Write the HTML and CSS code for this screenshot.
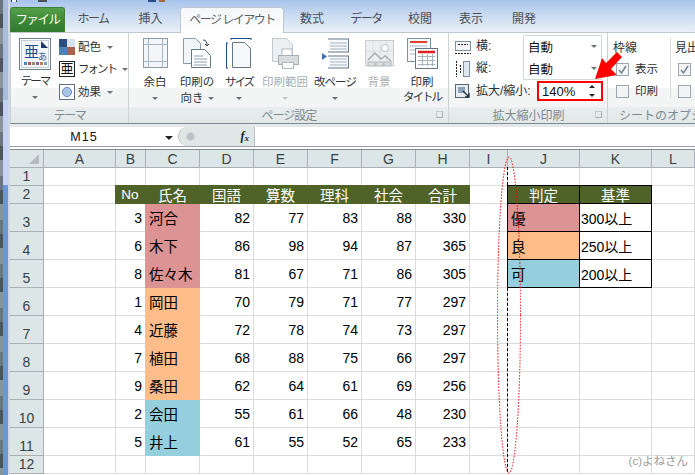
FILE: index.html
```html
<!DOCTYPE html>
<html lang="ja">
<head>
<meta charset="utf-8">
<title>ページ レイアウト</title>
<link rel="stylesheet" href="styles.css">
</head>
<body>
<div class="window">
  <div class="edge"><div class="edge-dark"></div><div class="edge-blue"><div class="edge-light"></div></div><div class="edge-pale"></div></div>
  <div class="main">
    <nav class="tabs">
      <div class="qat"><i class="q1"></i><i class="q2"></i><i class="q3"></i><i class="q4"></i></div>
      <div class="tab file kana">ファイル</div>
      <div class="tab w56 kana">ホーム</div>
      <div class="tab w59">挿入</div>
      <div class="tab active kana">ページ レイアウト</div>
      <div class="tab w56">数式</div>
      <div class="tab w52 kana">データ</div>
      <div class="tab w56">校閲</div>
      <div class="tab w46">表示</div>
      <div class="tab w60">開発</div>
    </nav>

    <section class="ribbon">
      <div class="group g-theme">
        <div class="group-body">
          <div class="big theme-btn">
            <svg class="ic-theme" width="32" height="33" viewBox="0 0 32 33">
              <rect x=".5" y=".5" width="31" height="31" fill="#fff" stroke="#6b7f8f"/>
              <rect x="2.5" y="2.5" width="27" height="27" fill="#f4f7fa" stroke="#c4ced6"/>
              <path d="M22 3l7 7h-7z" fill="#1f3a66"/>
              <text x="5" y="19" class="svg-t1">亜</text>
              <text x="19" y="22" class="svg-t2">あ</text>
              <rect x="5" y="24" width="3" height="3" fill="#4f81bd"/><rect x="9" y="24" width="3" height="3" fill="#c0504d"/><rect x="13" y="24" width="3" height="3" fill="#9b8a6d"/><rect x="17" y="24" width="3" height="3" fill="#8064a2"/><rect x="21" y="24" width="3" height="3" fill="#c07a50"/><rect x="25" y="24" width="3" height="3" fill="#7f9fbf"/>
            </svg>
            <span class="lbl theme-lbl kana2">テーマ</span>
            <i class="arrow"></i>
          </div>
          <div class="small-col">
            <div class="small"><svg width="16" height="16" viewBox="0 0 16 16"><rect width="8" height="8" fill="#2b4d86"/><rect x="8" width="8" height="8" fill="#dbe3ea"/><rect y="8" width="8" height="8" fill="#4f81bd"/><rect x="8" y="8" width="8" height="8" fill="#a9614f"/></svg><span class="lbl">配色</span><i class="arrow"></i></div>
            <div class="small"><span class="font-ic">亜</span><span class="lbl kana2">フォント</span><i class="arrow"></i></div>
            <div class="small"><svg width="16" height="16" viewBox="0 0 16 16"><rect x=".5" y=".5" width="15" height="15" fill="#fff" stroke="#5f7183"/><circle cx="8" cy="8" r="4.6" fill="#a9c4e6" stroke="#6c8fbc"/></svg><span class="lbl">効果</span><i class="arrow"></i></div>
          </div>
        </div>
        <div class="group-name kana">テーマ</div>
      </div>

      <div class="group g-page">
        <div class="group-body">
          <div class="big w42">
            <svg class="ic" width="25" height="31" viewBox="0 0 25 31"><rect x=".5" y=".5" width="24" height="29" fill="#f3f6f9" stroke="#8a9aa8"/><path d="M5.500 1v29M19.500 1v29M1 6.500h23M1 23.500h23" stroke="#a8b6c2"/></svg>
            <span class="lbl">余白</span><i class="arrow"></i>
          </div>
          <div class="big w42">
            <svg class="ic" width="28" height="31" viewBox="0 0 28 31"><path d="M.5.500h12l5 5v20H.500z" fill="#f3f6f9" stroke="#8a9aa8"/><path d="M8.500 11.500h13l6 6v12h-19z" fill="#fff" stroke="#64788c"/><path d="M11 18h9M11 21h13M11 24h13M11 27h13" stroke="#8ba0b4"/><path d="M20 2c3 0 4 2 4 5m-2-1l2 2 2-2" fill="none" stroke="#33485e"/></svg>
            <span class="lbl">印刷の<br>向き<i class="arrow inl"></i></span>
          </div>
          <div class="big w42">
            <svg class="ic" width="26" height="31" viewBox="0 0 26 31"><path d="M5 .500h20M5 0v2M25 0v2M.5 5v25M0 5h2M0 30h2" stroke="#1f4e8c"/><path d="M6.500 4.500h12l6 6v19h-18z" fill="#f6f8fa" stroke="#64788c"/></svg>
            <span class="lbl kana2">サイズ</span><i class="arrow"></i>
          </div>
          <div class="big w50 dim">
            <svg class="ic" width="27" height="31" viewBox="0 0 27 31"><path d="M.5.500h14l6 6v17H.500z" fill="#eceff1" stroke="#c3c8cc"/><rect x="10" y="11" width="10" height="7" fill="#fff" stroke="#b4babf"/><rect x="6.500" y="17.500" width="20" height="9" fill="#d8dcdf" stroke="#a8afb4"/><rect x="10.500" y="24.500" width="11" height="6" fill="#fff" stroke="#b4babf"/></svg>
            <span class="lbl">印刷範囲</span><i class="arrow"></i>
          </div>
          <div class="big w50">
            <svg class="ic" width="27" height="31" viewBox="0 0 27 31"><path d="M0 15l5 3.500L0 22z" fill="#3f6fb5"/><path d="M6.500.500h20v14h-20zM6.500 17.500h20v13h-20z" fill="#f7f9fb" stroke="none"/><path d="M6 1h21M6 14h21M6 18h21M6 30h21M26.500 1v13M26.500 18v12" stroke="#64788c"/><path d="M8 5h17M8 8h17M8 11h17M8 21h17M8 24h17M8 27h17" stroke="#a3b3c1"/></svg>
            <span class="lbl kana1">改ページ</span><i class="arrow"></i>
          </div>
          <div class="big w38 dim">
            <svg class="ic pic" width="29" height="27" viewBox="0 0 29 27"><rect x=".5" y=".5" width="28" height="25" fill="#eceeef" stroke="#c9cdd0"/><path d="M1 11h27M8 1v20M15 1v20M22 1v20" stroke="#dcdfe1"/><circle cx="20" cy="8" r="3.500" fill="#fff" stroke="#bcc1c5"/><path d="M3 20l7-7 6 6 4-3 6 5" fill="none" stroke="#a7adb2" stroke-width="1.500"/><rect x="3" y="22" width="7" height="4" fill="#ddd" stroke="#b3b8bc"/><rect x="11" y="22" width="7" height="4" fill="#ddd" stroke="#b3b8bc"/><rect x="19" y="22" width="7" height="4" fill="#ddd" stroke="#b3b8bc"/></svg>
            <span class="lbl">背景</span>
          </div>
          <div class="big w46 title-btn">
            <svg class="ic" width="31" height="31" viewBox="0 0 31 31"><rect x=".5" y=".5" width="23" height="23" fill="#f6f8fa" stroke="#7e91a3"/><path d="M3 4h17" stroke="#e04030" stroke-width="2"/><path d="M3 8h17M3 12h9M3 16h9" stroke="#b0bcc7"/><rect x="8.500" y="10.500" width="22" height="20" fill="#fff" stroke="#64788c"/><path d="M11 14h17" stroke="#e02020" stroke-width="2.500"/><path d="M11 18.500h17M11 22.500h17M11 26.500h17M15.500 16v12M20.500 16v12M25.500 16v12" stroke="#a3b3c1"/></svg>
            <span class="lbl">印刷<br><span class="kana2">タイトル</span></span>
          </div>
        </div>
        <div class="group-name"><span class="kana1">ページ設定</span><i class="launcher"></i></div>
      </div>

      <div class="group g-scale">
        <div class="group-body col">
          <div class="scale-row">
            <svg class="ic-s" width="16" height="16" viewBox="0 0 16 16"><rect x=".5" y="2.500" width="15" height="9" fill="#f5f7f9" stroke="#7e91a3"/><path d="M0 14.500h16M3 5.500h10" stroke="#222" stroke-dasharray="2 1"/></svg>
            <span class="lbl scale-lbl">横:</span>
            <div class="combo">自動<i class="arrow"></i></div>
          </div>
          <div class="scale-row">
            <svg class="ic-s" width="16" height="16" viewBox="0 0 16 16"><rect x="8.500" y=".5" width="6" height="15" fill="#dfe8f1" stroke="#7e91a3"/><path d="M1.500 0v16M5.500 4v8" stroke="#222" stroke-dasharray="2 1"/></svg>
            <span class="lbl scale-lbl">縦:</span>
            <div class="combo">自動<i class="arrow"></i></div>
          </div>
          <div class="scale-row">
            <svg class="ic-s" width="16" height="16" viewBox="0 0 16 16"><rect x=".5" y=".5" width="13" height="13" fill="#e8edf1" stroke="#52667a"/><rect x="3" y="3" width="7" height="6" fill="#8ca3ba"/><path d="M8 7l6 6m0-4v4h-4" fill="none" stroke="#1c2c3c" stroke-width="1.300"/></svg>
            <span class="lbl scale-lbl wide">拡大/縮小:</span>
            <div class="spin"><span>140%</span><span class="updown"><i class="up"></i><i class="down"></i></span></div>
          </div>
        </div>
        <div class="group-name"><span>拡大縮小印刷</span><i class="launcher"></i></div>
      </div>

      <div class="group g-sheet">
        <div class="group-body">
          <div class="opt-col">
            <div class="opt-head">枠線</div>
            <div class="opt"><span class="chk on"><svg width="11" height="11" viewBox="0 0 11 11"><path d="M2 6l2.500 3L9 2" fill="none" stroke="#7a8894" stroke-width="1.600"/></svg></span><span class="lbl">表示</span></div>
            <div class="opt"><span class="chk"></span><span class="lbl">印刷</span></div>
          </div>
          <div class="opt-col second">
            <div class="opt-head">見出し</div>
            <div class="opt"><span class="chk on"><svg width="11" height="11" viewBox="0 0 11 11"><path d="M2 6l2.500 3L9 2" fill="none" stroke="#7a8894" stroke-width="1.600"/></svg></span></div>
            <div class="opt"><span class="chk"></span></div>
          </div>
        </div>
        <div class="group-name left">シートのオプション</div>
      </div>
    </section>

    <div class="ribbon-gap"></div>

    <div class="formula">
      <div class="namebox"><span>M15</span><i class="arrow dark"></i></div>
      <div class="fx-part"><span class="knob"></span><span class="fx">f<sub>x</sub></span></div>
      <div class="input"></div>
    </div>
    <div class="formula-gap"></div>

    <div class="sheet">
      <div class="c hd corner"><i></i></div>
      <div class="c hd">A</div><div class="c hd">B</div><div class="c hd">C</div><div class="c hd">D</div><div class="c hd">E</div><div class="c hd">F</div><div class="c hd">G</div><div class="c hd">H</div><div class="c hd">I</div><div class="c hd">J</div><div class="c hd">K</div><div class="c hd">L</div>

      <div class="c rh">1</div>
      <div class="c"></div><div class="c"></div><div class="c"></div><div class="c"></div><div class="c"></div><div class="c"></div><div class="c"></div><div class="c"></div><div class="c"></div><div class="c"></div><div class="c"></div><div class="c"></div>

      <div class="c rh">2</div><div class="c"></div>
      <div class="c th no">No</div><div class="c th">氏名</div><div class="c th">国語</div><div class="c th">算数</div><div class="c th">理科</div><div class="c th">社会</div><div class="c th">合計</div>
      <div class="c"></div><div class="c th bx jl jt">判定</div><div class="c th bx jt">基準</div><div class="c"></div>

      <div class="c rh">3</div><div class="c"></div><div class="c n">3</div><div class="c nm pink">河合</div><div class="c n">82</div><div class="c n">77</div><div class="c n">83</div><div class="c n">88</div><div class="c n">330</div><div class="c"></div><div class="c nm pink bx jl">優</div><div class="c nm bx">300以上</div><div class="c"></div>
      <div class="c rh">4</div><div class="c"></div><div class="c n">6</div><div class="c nm pink">木下</div><div class="c n">86</div><div class="c n">98</div><div class="c n">94</div><div class="c n">87</div><div class="c n">365</div><div class="c"></div><div class="c nm orange bx jl">良</div><div class="c nm bx">250以上</div><div class="c"></div>
      <div class="c rh">5</div><div class="c"></div><div class="c n">8</div><div class="c nm pink">佐々木</div><div class="c n">81</div><div class="c n">67</div><div class="c n">71</div><div class="c n">86</div><div class="c n">305</div><div class="c"></div><div class="c nm blue bx jl">可</div><div class="c nm bx">200以上</div><div class="c"></div>
      <div class="c rh">6</div><div class="c"></div><div class="c n">1</div><div class="c nm orange">岡田</div><div class="c n">70</div><div class="c n">79</div><div class="c n">71</div><div class="c n">77</div><div class="c n">297</div><div class="c"></div><div class="c"></div><div class="c"></div><div class="c"></div>
      <div class="c rh">7</div><div class="c"></div><div class="c n">4</div><div class="c nm orange">近藤</div><div class="c n">72</div><div class="c n">78</div><div class="c n">74</div><div class="c n">73</div><div class="c n">297</div><div class="c"></div><div class="c"></div><div class="c"></div><div class="c"></div>
      <div class="c rh">8</div><div class="c"></div><div class="c n">7</div><div class="c nm orange">植田</div><div class="c n">68</div><div class="c n">88</div><div class="c n">75</div><div class="c n">66</div><div class="c n">297</div><div class="c"></div><div class="c"></div><div class="c"></div><div class="c"></div>
      <div class="c rh">9</div><div class="c"></div><div class="c n">9</div><div class="c nm orange">桑田</div><div class="c n">62</div><div class="c n">64</div><div class="c n">61</div><div class="c n">69</div><div class="c n">256</div><div class="c"></div><div class="c"></div><div class="c"></div><div class="c"></div>
      <div class="c rh">10</div><div class="c"></div><div class="c n">2</div><div class="c nm blue">会田</div><div class="c n">55</div><div class="c n">61</div><div class="c n">66</div><div class="c n">48</div><div class="c n">230</div><div class="c"></div><div class="c"></div><div class="c"></div><div class="c"></div>
      <div class="c rh">11</div><div class="c"></div><div class="c n">5</div><div class="c nm blue">井上</div><div class="c n">61</div><div class="c n">55</div><div class="c n">52</div><div class="c n">65</div><div class="c n">233</div><div class="c"></div><div class="c"></div><div class="c"></div><div class="c"></div>
      <div class="c rh">12</div><div class="c"></div><div class="c"></div><div class="c"></div><div class="c"></div><div class="c"></div><div class="c"></div><div class="c"></div><div class="c"></div><div class="c"></div><div class="c"></div><div class="c"></div><div class="c"></div>

      <div class="pagebreak"></div>
      <svg class="ellipse" width="30" height="330" viewBox="0 0 30 330"><ellipse cx="15" cy="165" rx="11.500" ry="158" fill="none" stroke="#f00" stroke-dasharray="1.500 1.500"/></svg>
      <div class="credit">(c)よねさん</div>
    </div>
  </div>

  <svg class="red-arrow" width="32" height="32" viewBox="0 0 32 32"><path d="M1 29L8 8l4 5L23 2l5 5-11 12 6 6z" fill="#f00"/></svg>
</div>
</body>
</html>
```

FILE: styles.css
```css
* { box-sizing: border-box; }
html, body { margin: 0; padding: 0; background: #fff; }
body {
  font-family: "Liberation Sans", "Noto Sans CJK JP", sans-serif;
  overflow: hidden;
}
i { display: block; font-style: normal; }

.window {
  position: relative;
  display: flex;
  width: 695px;
  height: 475px;
  overflow: hidden;
}

/* left edge */
.edge { display: flex; width: 10px; flex: none; }
.edge-dark { width: 3px; background: repeating-linear-gradient(#6c7480 0 14px, #4e545c 14px 28px, #8a929c 28px 44px); }
.edge-blue { width: 5px; background: #6b97da; }
.edge-light { height: 185px; background: linear-gradient(#a8bcdc 0, #a8bcdc 100px, #c4d0f2 100px, #c8d4f4 185px); }
.edge-pale { width: 2px; background: #cfd8e4; }

.main { flex: 1; min-width: 0; display: flex; flex-direction: column; }

/* tabs */
.tabs {
  position: relative;
  display: flex;
  align-items: flex-end;
  height: 33px;
  flex: none;
  background: linear-gradient(#a6c3ec 0, #c4d6f0 12px, #eaf1f8 32px);
  border-bottom: 1px solid #c0c8d0;
}
.qat { position: absolute; left: 0; top: 0; width: 200px; height: 2px; }
.qat i { position: absolute; top: 0; height: 2px; }
.q1 { left: 1px; width: 6px; background: #f0f4f8; border-left: 1px solid #3a4a5a; border-right: 1px solid #3a4a5a; }
.q2 { left: 28px; width: 9px; background: #4a5258; }
.q3 { left: 138px; width: 8px; background: #2b4d86; }
.q4 { left: 149px; width: 6px; background: #a56a40; }
.tab {
  height: 25px;
  font-size: 12px;
  line-height: 25px;
  text-align: center;
  color: #4a4f55;
  flex: none;
}
.kana { letter-spacing: -1.500px; }
.kana1 { letter-spacing: -1px; }
.kana2 { letter-spacing: -2px; }
.w38 { width: 38px; }
.w42 { width: 42px; }
.w46 { width: 46px; }
.w50 { width: 50px; }
.w52 { width: 52px; }
.w56 { width: 56px; }
.w59 { width: 59px; }
.w60 { width: 60px; }
.tab.file {
  width: 55px;
  color: #fff;
  font-size: 12.500px;
  background: linear-gradient(#56a04a, #3f8a37 50%, #2f7a2c);
  border: 1px solid #3f7f36;
  border-bottom: 0;
  border-radius: 3px 3px 0 0;
}
.tab.active {
  width: 104px;
  height: 26px;
  margin-bottom: -1px;
  background: linear-gradient(#f4f6f8, #fff);
  border: 1px solid #c0c8d0;
  border-bottom: 0;
  border-radius: 3px 3px 0 0;
  color: #5a5f65;
}

/* ribbon */
.ribbon {
  display: flex;
  height: 91px;
  flex: none;
  background: linear-gradient(#fff 0, #fff 55px, #f4f6f6 55px, #f3f5f5 74px, #e9edee 74px, #e2e8e8 90px);
  border-bottom: 1px solid #7d8a90;
  border-left: 1px solid #c9d2da;
}
.group {
  display: flex;
  flex-direction: column;
  flex: none;
  border-right: 1px solid #ccd3d6;
  margin-right: 1px;
  overflow: hidden;
}
.group-body { display: flex; height: 73px; flex: none; }
.group-body.col { flex-direction: column; padding: 2px 0 0 5px; }
.group-name {
  display: flex;
  justify-content: center;
  align-items: center;
  position: relative;
  flex: 1;
  font-size: 12px;
  color: #7c8a92;
  padding-bottom: 3px;
}
.group-name.left { justify-content: flex-start; padding-left: 10px; white-space: nowrap; }
.launcher {
  position: absolute;
  right: 5px;
  top: 5px;
  width: 7px;
  height: 7px;
  border: 1px solid #a7b0b5;
  border-top-color: #c6ccd0;
  border-left-color: #c6ccd0;
}
.g-theme { width: 118px; }
.g-page { width: 319px; }
.g-scale { width: 158px; }
.g-sheet { width: 90px; border-right: 0; }

.lbl { font-size: 11.500px; line-height: 15px; color: #2e3236; white-space: nowrap; }
.dim .lbl { color: #a9afb3; }
.arrow {
  width: 0;
  height: 0;
  border: 3px solid transparent;
  border-top: 3.500px solid #6b7176;
  border-bottom: 0;
}
.dim .arrow { border-top-color: #c3c8cb; }
.arrow.inl { display: inline-block; margin-left: 4px; vertical-align: 2px; }
.arrow.dark { border-width: 4px 4px 0; border-top-color: #222; }

.big {
  display: flex;
  flex-direction: column;
  align-items: center;
  flex: none;
  padding-top: 5px;
  text-align: center;
}
.big .ic { height: 31px; margin-bottom: 6px; flex: none; }
.big .pic { height: 27px; margin: 2px 0 8px; }
.big .arrow { margin-top: 7px; }
.theme-btn { width: 48px; }
.ic-theme { flex: none; }
.theme-lbl { margin-top: 3px; }
.small-col { display: flex; flex-direction: column; gap: 6px; padding-top: 6px; }
.small { display: flex; align-items: center; gap: 3px; height: 16px; }
.small:last-child { margin-top: 1px; }
.small .arrow { margin-left: 3px; }
.font-ic {
  width: 16px;
  height: 16px;
  border: 1px solid #222;
  font-size: 13px;
  line-height: 13px;
  text-align: center;
  color: #111;
  background: #fff;
}
.svg-t1 { font-size: 15px; fill: #1f4e8c; font-family: "Noto Sans CJK JP", sans-serif; }
.svg-t2 { font-size: 9px; fill: #1f4e8c; font-family: "Noto Sans CJK JP", sans-serif; }

.g-page .group-body { padding-left: 4px; }
.title-btn { margin-left: 1px; }
.title-btn .lbl { line-height: 15px; }

.scale-row { display: flex; align-items: center; height: 23px; flex: none; }
.scale-row:nth-child(2) { margin-top: -1px; }
.ic-s { flex: none; margin-right: 5px; }
.scale-lbl { width: 47px; flex: none; font-size: 12px; }
.scale-lbl.wide { width: 61px; }
.combo {
  display: flex;
  justify-content: space-between;
  align-items: center;
  width: 79px;
  height: 23px;
  padding: 0 4px;
  font-size: 12.500px;
  color: #111;
  background: #fff;
  border: 1px solid #d2d8dc;
}
.scale-row:nth-child(2) .combo { border-top: 0; }
.spin {
  display: flex;
  justify-content: space-between;
  align-items: center;
  width: 66px;
  height: 20px;
  padding: 0 6px 0 3px;
  margin-top: -1px;
  font-size: 13px;
  color: #111;
  background: #fff;
  border: 2px solid #f00;
}
.updown { display: flex; flex-direction: column; gap: 6px; }
.up, .down { width: 0; height: 0; border: 3px solid transparent; }
.up { border-top: 0; border-bottom: 3px solid #222; }
.down { border-bottom: 0; border-top: 3px solid #222; }

.opt-col { display: flex; flex-direction: column; flex: none; width: 61px; padding: 7px 0 0 4px; }
.opt-col.second { width: 30px; padding-left: 5px; position: relative; }
.opt-col.second::before {
  content: "";
  position: absolute;
  left: 0;
  top: 5px;
  height: 60px;
  width: 1px;
  background: #d7dde0;
}
.opt-head { font-size: 12px; line-height: 16px; color: #2e3236; white-space: nowrap; margin-bottom: 2px; }
.opt { display: flex; align-items: center; gap: 6px; height: 22px; padding-left: 3px; }
.chk {
  display: flex;
  justify-content: center;
  align-items: center;
  width: 13px;
  height: 13px;
  flex: none;
  background: #f2f4f6;
  border: 1px solid #9ba6ae;
}

.ribbon-gap { height: 3px; flex: none; background: #e4e8ea; }

/* formula bar */
.formula {
  display: flex;
  height: 20px;
  flex: none;
  background: #fff;
  border-bottom: 1px solid #9aa2a6;
}
.namebox {
  position: relative;
  display: flex;
  justify-content: center;
  align-items: center;
  width: 168px;
  flex: none;
  font-size: 12.500px;
  letter-spacing: 1px;
  color: #111;
  padding-right: 20px;
}
.namebox .arrow { position: absolute; right: 5px; top: 9px; }
.fx-part {
  display: flex;
  justify-content: space-between;
  align-items: center;
  width: 77px;
  flex: none;
  padding: 0 5px 0 7px;
  background: #dfe6e6;
  border: 1px solid #b8c0c4;
  border-width: 0 1px 0 1px;
  border-radius: 10px 0 0 10px;
}
.knob { width: 9px; height: 9px; border-radius: 50%; background: #b8c2c6; border: 1px solid #cfd6d8; }
.fx { font-family: "Liberation Serif", serif; font-style: italic; font-weight: 700; font-size: 12px; color: #222; }
.fx sub { font-size: 9px; vertical-align: -1px; }
.input { flex: 1; }
.formula-gap { height: 3px; flex: none; background: #fff; border-bottom: 1px solid #7f8a8a; }

/* sheet */
.sheet {
  position: relative;
  display: grid;
  flex: none;
  grid-template-columns: 34px 72px 30px 54px 54px 54px 54px 54px 54px 38px 72px 72px 43px;
  grid-template-rows: 18px 18px 18px repeat(9, 28px) 18px;
  overflow: hidden;
  height: 324px;
}
.c {
  border: solid #dcdcdc;
  border-width: 0 1px 1px 0;
  font-size: 14px;
  color: #000;
  background: #fff;
  min-width: 0;
  white-space: nowrap;
}
.hd, .rh {
  display: flex;
  justify-content: center;
  background: #dde6e6;
  border-color: #a9b1b7;
  color: #3a3f44;
}
.hd { align-items: center; }
.rh { align-items: flex-end; line-height: 17px; }
.corner { position: relative; }
.corner i {
  position: absolute;
  right: 4px;
  bottom: 3px;
  width: 0;
  height: 0;
  border-style: solid;
  border-width: 0 0 10px 10px;
  border-color: transparent transparent #b3bbbe transparent;
}
.n { display: flex; justify-content: flex-end; align-items: center; padding-right: 3px; }
.nm { display: flex; align-items: center; padding-left: 3px; font-size: 14.500px; }
.nm.pink, .nm.orange, .nm.blue { margin-left: -1px; padding-left: 4px; }
.pink { background: #dc9393; border-color: transparent; }
.orange { background: #fdbd8b; border-color: transparent; }
.blue { background: #95cfdd; border-color: transparent; }
.th {
  display: flex;
  justify-content: center;
  align-items: center;
  margin-top: -1px;
  background: #4f6228;
  border-color: #4f6228;
  color: #fff;
  font-size: 14.500px;
}
.th.no { margin-left: -1px; font-size: 13.500px; }
.bx { border-color: #000; }
.jl { border-left: 1px solid #000; margin-left: -1px; }
.jt { border-top: 1px solid #000; }
.nm.bx { font-size: 14px; padding-left: 1px; }
.nm.jl { padding-left: 3px; font-size: 14.500px; }

.pagebreak {
  position: absolute;
  left: 497px;
  top: 17px;
  height: 310px;
  border-left: 1px dashed #000;
}
.ellipse { position: absolute; left: 484px; top: 0; }
.credit { position: absolute; right: 7px; bottom: 6px; font-size: 11.500px; color: #9a9a9a; }

.red-arrow { position: absolute; left: 594px; top: 50px; }
```
